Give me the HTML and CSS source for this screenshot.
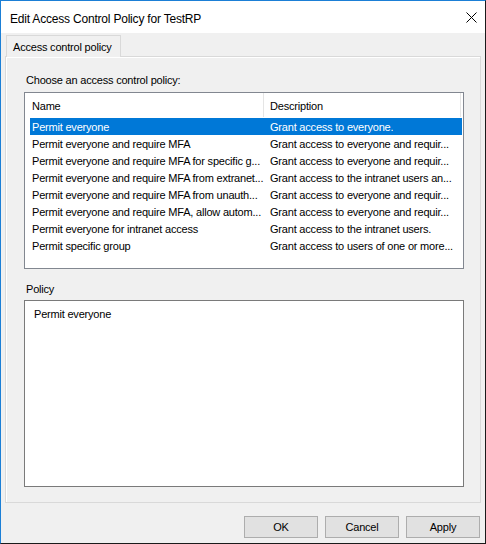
FILE: index.html
```html
<!DOCTYPE html>
<html>
<head>
<meta charset="utf-8">
<link rel="stylesheet" href="styles.css">
</head>
<body>
<div class="window">
  <div class="titlebar">
    <span class="title">Edit Access Control Policy for TestRP</span>
    <svg class="close" width="11" height="11" viewBox="0 0 11 11"><path d="M0.5 0.5 L10.5 10.5 M10.5 0.5 L0.5 10.5" stroke="#000" stroke-width="1" fill="none"/></svg>
  </div>
  <div class="content">
    <div class="tabs"><div class="tab">Access control policy</div></div>
    <div class="panel">
      <div class="label">Choose an access control policy:</div>
      <div class="list">
        <div class="list-header">
          <div class="hcell hname">Name</div>
          <div class="hcell hdesc">Description</div>
        </div>
        <div class="row selected"><div class="cname">Permit everyone</div><div class="cdesc">Grant access to everyone.</div></div>
        <div class="row"><div class="cname">Permit everyone and require MFA</div><div class="cdesc">Grant access to everyone and requir...</div></div>
        <div class="row"><div class="cname">Permit everyone and require MFA for specific g...</div><div class="cdesc">Grant access to everyone and requir...</div></div>
        <div class="row"><div class="cname">Permit everyone and require MFA from extranet...</div><div class="cdesc">Grant access to the intranet users an...</div></div>
        <div class="row"><div class="cname">Permit everyone and require MFA from unauth...</div><div class="cdesc">Grant access to everyone and requir...</div></div>
        <div class="row"><div class="cname">Permit everyone and require MFA, allow autom...</div><div class="cdesc">Grant access to everyone and requir...</div></div>
        <div class="row"><div class="cname">Permit everyone for intranet access</div><div class="cdesc">Grant access to the intranet users.</div></div>
        <div class="row"><div class="cname">Permit specific group</div><div class="cdesc">Grant access to users of one or more...</div></div>
      </div>
      <div class="label policy-label">Policy</div>
      <div class="textbox">Permit everyone</div>
    </div>
    <div class="buttons">
      <div class="btn">OK</div>
      <div class="btn">Cancel</div>
      <div class="btn">Apply</div>
    </div>
  </div>
</div>
</body>
</html>
```
FILE: styles.css
```css
html, body {
  margin: 0;
  padding: 0;
}
body {
  font-family: "Liberation Sans", Arial, sans-serif;
  font-size: 11px;
  letter-spacing: -0.2px;
  color: #000;
}
.window {
  width: 486px;
  height: 544px;
  box-sizing: border-box;
  border-top: 1px solid #1b7fd6;
  border-left: 1px solid #1b7fd6;
  border-right: 1px solid #1a1a1a;
  border-bottom: 1px solid #1a1a1a;
  background: #f0f0f0;
  display: flex;
  flex-direction: column;
}
.titlebar {
  height: 32px;
  background: #fff;
  display: flex;
  align-items: center;
  padding-left: 9px;
  padding-top: 3px;
  box-sizing: border-box;
}
.title {
  font-size: 12px;
  letter-spacing: -0.2px;
}
.close {
  margin-left: auto;
  margin-right: 8px;
  margin-top: -3px;
}
.content {
  padding: 2px 4px 0 4px;
  display: flex;
  flex-direction: column;
}
.tabs {
  display: flex;
  height: 21px;
}
.tab {
  margin-left: 1px;
  width: 115px;
  height: 22px;
  box-sizing: border-box;
  border: 1px solid #d9d9d9;
  border-bottom: none;
  background: #f0f0f0;
  padding-left: 6px;
  padding-top: 1px;
  line-height: 20px;
  position: relative;
  z-index: 1;
}
.panel {
  border: 1px solid #d9d9d9;
  box-shadow: inset 1px 1px 0 #fff;
  padding: 15px 0 15px 18px;
  display: flex;
  flex-direction: column;
}
.label {
  line-height: 16px;
  height: 15px;
  padding-left: 2px;
  padding-top: 1px;
  box-sizing: border-box;
  line-height: 14px;
}
.list {
  margin-top: 5px;
  width: 440px;
  height: 177px;
  box-sizing: border-box;
  border: 1px solid #828790;
  background: #fff;
}
.list-header {
  display: flex;
  height: 24px;
  margin-bottom: 1px;
}
.hcell {
  line-height: 24px;
  padding-top: 1px;
  box-sizing: border-box;
  border-right: 1px solid #e5e5e5;
}
.hname {
  width: 239px;
  padding-left: 7px;
}
.hdesc {
  width: 197px;
  padding-left: 6px;
}
.row {
  display: flex;
  margin-left: 5px;
  width: 432px;
  height: 17px;
  box-sizing: border-box;
  padding-top: 1px;
  line-height: 16px;
  white-space: nowrap;
}
.row.selected {
  background: #0078d7;
  color: #fff;
}
.cname {
  width: 238px;
  padding-left: 2px;
  box-sizing: border-box;
  overflow: hidden;
}
.cdesc {
  padding-left: 2px;
  overflow: hidden;
}
.policy-label {
  margin-top: 12px;
}
.textbox {
  margin-top: 4px;
  width: 440px;
  height: 187px;
  box-sizing: border-box;
  border: 1px solid #7a7a7a;
  background: #fff;
  padding: 6px 9px 5px 9px;
  line-height: 15px;
}
.buttons {
  margin-top: 13px;
  margin-right: 1px;
  display: flex;
  justify-content: flex-end;
  gap: 7px;
}
.btn {
  width: 74px;
  height: 22px;
  box-sizing: border-box;
  border: 1px solid #adadad;
  background: #e1e1e1;
  text-align: center;
  line-height: 20px;
}
```
